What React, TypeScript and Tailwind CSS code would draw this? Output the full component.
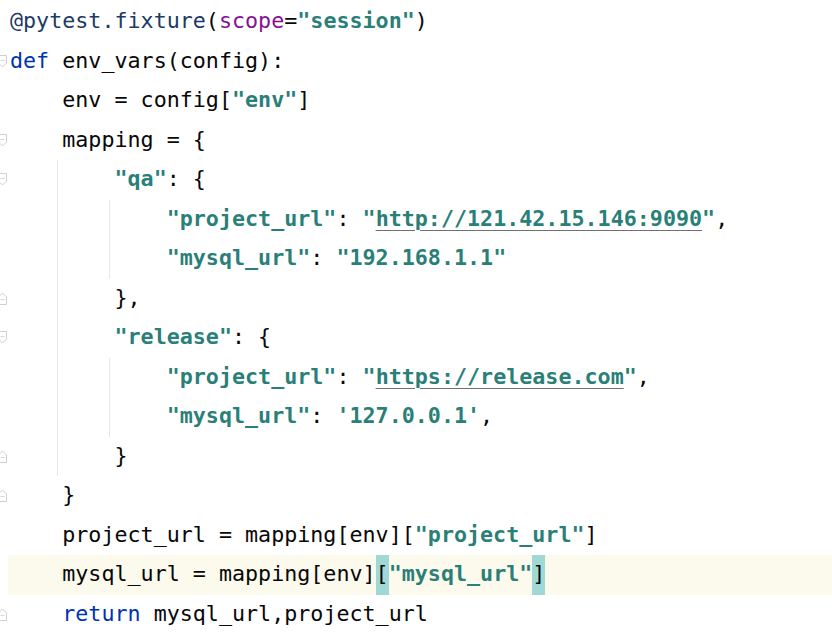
import React from 'react'

type Kind = 'plain' | 'kw' | 'str' | 'url' | 'param' | 'deco' | 'match'
type Tok = [string, Kind?]

type Line = {
  indent: number
  toks: Tok[]
  fold?: 'start' | 'end'
  guides?: number[]
  current?: boolean
}

const lines: Line[] = [
  { indent: 0, toks: [['@pytest.fixture', 'deco'], ['('], ['scope', 'param'], ['='], ['"session"', 'str'], [')']] },
  { indent: 0, fold: 'start', toks: [['def', 'kw'], [' env_vars(config):']] },
  { indent: 1, toks: [['env = config['], ['"env"', 'str'], [']']] },
  { indent: 1, fold: 'start', toks: [['mapping = {']] },
  { indent: 2, fold: 'start', guides: [1], toks: [['"qa"', 'str'], [': {']] },
  { indent: 3, guides: [1, 2], toks: [['"project_url"', 'str'], [': '], ['"', 'str'], ['http://121.42.15.146:9090', 'url'], ['"', 'str'], [',']] },
  { indent: 3, guides: [1, 2], toks: [['"mysql_url"', 'str'], [': '], ['"192.168.1.1"', 'str']] },
  { indent: 2, fold: 'end', guides: [1], toks: [['},']] },
  { indent: 2, fold: 'start', guides: [1], toks: [['"release"', 'str'], [': {']] },
  { indent: 3, guides: [1, 2], toks: [['"project_url"', 'str'], [': '], ['"', 'str'], ['https://release.com', 'url'], ['"', 'str'], [',']] },
  { indent: 3, guides: [1, 2], toks: [['"mysql_url"', 'str'], [': '], ["'127.0.0.1'", 'str'], [',']] },
  { indent: 2, fold: 'end', guides: [1], toks: [['}']] },
  { indent: 1, fold: 'end', toks: [['}']] },
  { indent: 1, toks: [['project_url = mapping[env]['], ['"project_url"', 'str'], [']']] },
  { indent: 1, current: true, toks: [['mysql_url = mapping[env]'], ['[', 'match'], ['"mysql_url"', 'str'], [']', 'match']] },
  { indent: 1, fold: 'end', toks: [['return', 'kw'], [' mysql_url,project_url']] },
]

const kindClass: Record<Kind, string> = {
  plain: '',
  kw: 'text-[#0033b3]',
  str: 'text-[#2a7f78] font-bold',
  url: 'text-[#2a7f78] font-bold underline decoration-[#707070] decoration-1 underline-offset-[4px]',
  param: 'text-[#871094]',
  deco: 'text-[#203a64]',
  match: 'bg-[#a0d8d6] h-full inline-flex items-center',
}

// guide x inside the code column (column starts at x=8)
const guideLeft: Record<number, string> = {
  1: 'left-[49px]',
  2: 'left-[101px]',
}

function FoldIcon({ kind }: { kind: 'start' | 'end' }) {
  const d =
    kind === 'start'
      ? 'M0.5 0.5 H8.5 V8 L4.5 12 L0.5 8 Z'
      : 'M0.5 12.5 H8.5 V5 L4.5 1 L0.5 5 Z'
  const y = kind === 'start' ? 5.5 : 7.5
  return (
    <svg width="9" height="13" viewBox="0 0 9 13" className="shrink-0 -ml-[2px]">
      <path d={d} fill="#ffffff" stroke="#cfcfcf" strokeWidth="1" />
      <path d={`M2.5 ${y} H6.5`} stroke="#d6d6d6" strokeWidth="1" />
    </svg>
  )
}

export default function App() {
  return (
    <div className="w-[832px] h-[632px] bg-white overflow-hidden pt-[2px] font-['DejaVu_Sans_Mono','Liberation_Mono',monospace] text-[21.7px] text-[#080808]">
      {lines.map((line, i) => (
        <div key={i} className={`flex h-[39.5px] ${line.current ? 'bg-[#fcfaed]' : ''}`}>
          <div className="w-2 shrink-0 bg-white flex items-center overflow-visible">
            {line.fold && <FoldIcon kind={line.fold} />}
          </div>
          <div className="relative flex-1 flex items-center pl-[2px] whitespace-pre">
            {line.guides?.map((g) => (
              <div key={g} className={`absolute top-0 bottom-0 w-px bg-[#e6e6e6] ${guideLeft[g]}`} />
            ))}
            <span>{'    '.repeat(line.indent)}</span>
            {line.toks.map(([text, kind], j) => (
              <span key={j} className={kindClass[kind ?? 'plain']}>
                {text}
              </span>
            ))}
          </div>
        </div>
      ))}
    </div>
  )
}
